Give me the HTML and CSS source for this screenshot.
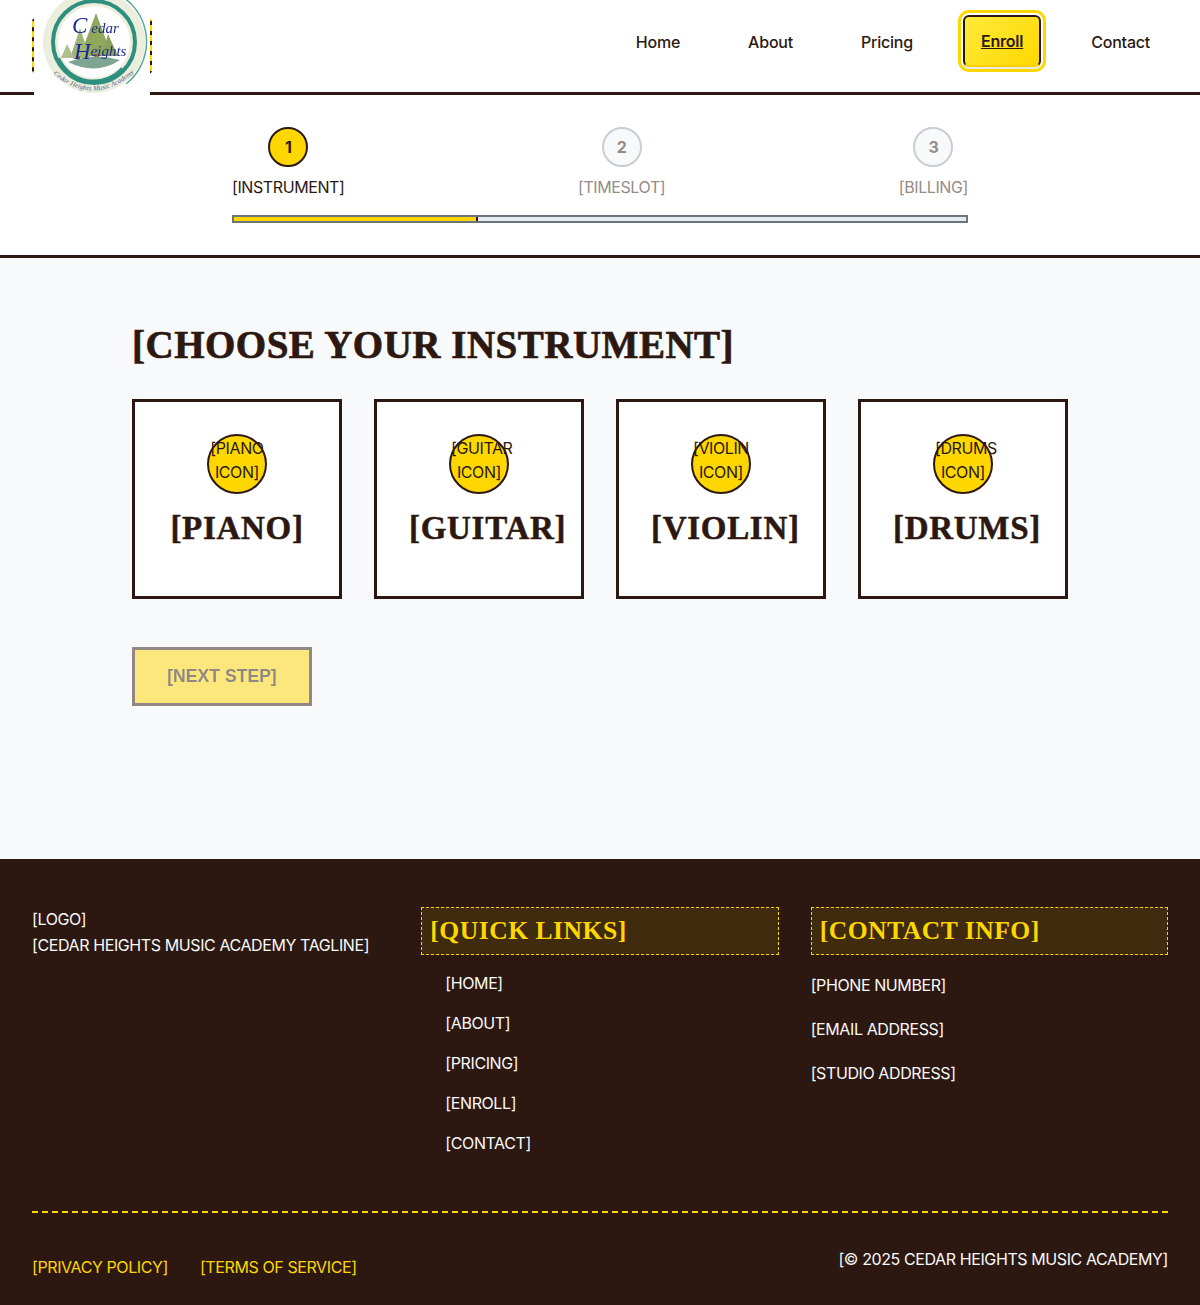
FILE: index.html
```html
<!DOCTYPE html>
<html lang="en">
<head>
    <meta charset="UTF-8">
    <meta name="viewport" content="width=device-width, initial-scale=1.0">
    <title>Cedar Heights Music Academy - Enroll</title>
    <link rel="stylesheet" href="styles.css">
</head>
<body>
    <header class="site-header">
        <a class="logo" href="#">
            <svg class="logo-mark" viewBox="0 0 116 95" width="116" height="95" role="img" aria-label="Cedar Heights Music Academy">
                <g class="logo-art">
                    <circle cx="60" cy="42" r="51" fill="#eceedd"/>
                    <path d="M84 -6 A54 54 0 0 1 92 84" fill="none" stroke="#5aa898" stroke-width="1.5"/>
                    <circle cx="60" cy="42" r="41" fill="none" stroke="#2f8f7f" stroke-width="4"/>
                    <path d="M25 58 A38 38 0 0 0 88 68" fill="none" stroke="#2f8f7f" stroke-width="2"/>
                    <circle cx="60" cy="42" r="36" fill="#fff"/>
                    <polygon points="62,13 46,56 78,56" fill="#8fa85c"/>
                    <polygon points="46,28 36,58 56,58" fill="#9fb578"/>
                    <polygon points="33,44 27,58 40,58" fill="#afc090"/>
                    <polygon points="74,34 68,56 84,56" fill="#8aa35c"/>
                    <rect x="60" y="54" width="5" height="10" fill="#a0603f"/>
                    <rect x="43" y="56" width="3" height="7" fill="#a0603f"/>
                    <path d="M34 62 Q60 52 86 60 Q62 76 34 62" fill="#7fa592"/>
                    <text class="logo-script" x="38" y="33"><tspan class="logo-cap">C</tspan><tspan dx="4">edar</tspan></text>
                    <text class="logo-script" x="40" y="59"><tspan class="logo-cap">H</tspan><tspan dy="-3">eights</tspan></text>
                </g>
                <path id="logoArc" d="M19 74 Q60 108 101 72" fill="none"/>
                <text class="logo-tag"><textPath href="#logoArc" textLength="90">Cedar Heights Music Academy</textPath></text>
            </svg>
        </a>
        <nav class="main-nav">
            <a href="#">Home</a>
            <a href="#">About</a>
            <a href="#">Pricing</a>
            <a class="nav-enroll" href="#">Enroll</a>
            <a href="#">Contact</a>
        </nav>
    </header>

    <section class="progress-section">
        <div class="progress-inner">
            <div class="steps">
                <div class="step active"><span class="step-num">1</span><span class="step-label">[INSTRUMENT]</span></div>
                <div class="step"><span class="step-num">2</span><span class="step-label">[TIMESLOT]</span></div>
                <div class="step"><span class="step-num">3</span><span class="step-label">[BILLING]</span></div>
            </div>
            <div class="progress-bar"><div class="progress-fill" style="width: 33.33%"></div></div>
        </div>
    </section>

    <main class="content">
        <h1>[CHOOSE YOUR INSTRUMENT]</h1>
        <div class="instruments">
            <div class="card">
                <div class="card-icon">[PIANO ICON]</div>
                <h3>[PIANO]</h3>
            </div>
            <div class="card">
                <div class="card-icon">[GUITAR ICON]</div>
                <h3>[GUITAR]</h3>
            </div>
            <div class="card">
                <div class="card-icon">[VIOLIN ICON]</div>
                <h3>[VIOLIN]</h3>
            </div>
            <div class="card">
                <div class="card-icon">[DRUMS ICON]</div>
                <h3>[DRUMS]</h3>
            </div>
        </div>
        <button class="next-btn" disabled>[NEXT STEP]</button>
    </main>

    <footer class="site-footer">
        <div class="footer-columns">
            <div class="footer-brand">
                <p>[LOGO]</p>
                <p>[CEDAR HEIGHTS MUSIC ACADEMY TAGLINE]</p>
            </div>
            <div>
                <h4>[QUICK LINKS]</h4>
                <ul class="footer-links">
                    <li><a href="#">[HOME]</a></li>
                    <li><a href="#">[ABOUT]</a></li>
                    <li><a href="#">[PRICING]</a></li>
                    <li><a href="#">[ENROLL]</a></li>
                    <li><a href="#">[CONTACT]</a></li>
                </ul>
            </div>
            <div>
                <h4>[CONTACT INFO]</h4>
                <div class="footer-contact">
                    <p>[PHONE NUMBER]</p>
                    <p>[EMAIL ADDRESS]</p>
                    <p>[STUDIO ADDRESS]</p>
                </div>
            </div>
        </div>
        <div class="footer-bottom">
            <div class="legal">
                <a href="#">[PRIVACY POLICY]</a>
                <a href="#">[TERMS OF SERVICE]</a>
            </div>
            <p class="copyright">[© 2025 CEDAR HEIGHTS MUSIC ACADEMY]</p>
        </div>
    </footer>
</body>
</html>
```

FILE: styles.css
```css
* {
    box-sizing: border-box;
}
body {
    margin: 0;
    font-family: Inter, 'Noto Sans', sans-serif;
    font-size: 16px;
    line-height: 1.6;
    letter-spacing: -0.4px;
    color: #2c1810;
    background-color: #ffffff;
}
a {
    color: inherit;
    text-decoration: none;
}

/* header */
.site-header {
    height: 95px;
    padding: 0 32px;
    display: flex;
    align-items: center;
    justify-content: space-between;
    background-color: #ffffff;
    border-bottom: 3px solid #2c1810;
}
.logo {
    position: relative;
    width: 120px;
    height: 56px;
    border-left: 2px dashed #ffd700;
    border-right: 2px dashed #ffd700;
    border-radius: 4px;
    background-color: #2c1810;
}
.logo-mark {
    position: absolute;
    left: 0;
    top: -18px;
    background-color: #ffffff;
}
.logo-art {
    filter: blur(0.4px);
}
.logo-script {
    font-family: 'Liberation Serif', serif;
    font-style: italic;
    font-size: 15px;
    letter-spacing: 0;
    fill: #1d2a8f;
}
.logo-cap {
    font-size: 23px;
}
.logo-tag {
    font-family: 'Liberation Serif', serif;
    font-style: italic;
    font-size: 7px;
    letter-spacing: 0;
    fill: #5d5f88;
}
.main-nav {
    display: flex;
    align-items: center;
    gap: 32px;
    margin-bottom: 7px;
    font-weight: 500;
    letter-spacing: -0.22px;
}
.main-nav a {
    padding: 8px 16px;
    border: 2px solid transparent;
    border-radius: 6px;
}
.main-nav .nav-enroll {
    padding: 12px 16px;
    line-height: 24px;
    font-weight: 600;
    text-decoration: underline;
    border-color: #2c1810 #2c1810 #ffcf00;
    background: linear-gradient(135deg, #ffeb3b, #ffd700);
    outline: 3px solid #ffd700;
    outline-offset: 2px;
    box-shadow: 0 2px 0 #e8e8e8;
    transform: translateY(-2px);
}

/* progress */
.progress-section {
    padding: 32px 0;
    background-color: #ffffff;
    border-bottom: 3px solid #2c1810;
}
.progress-inner {
    width: 736px;
    margin: 0 auto;
}
.steps {
    display: flex;
    justify-content: space-between;
    margin-bottom: 16px;
}
.step {
    display: flex;
    flex-direction: column;
    align-items: center;
    gap: 8px;
    color: #958b87;
}
.step.active {
    color: #2c1810;
}
.step-label {
    line-height: 24px;
}
.step-num {
    width: 40px;
    height: 40px;
    display: flex;
    align-items: center;
    justify-content: center;
    padding-top: 1px;
    border: 2px solid #c9ced4;
    border-radius: 50%;
    background-color: #f8f9fa;
    font-weight: 700;
}
.step.active .step-num {
    border-color: #2c1810;
    background-color: #ffd700;
}
.progress-bar {
    height: 8px;
    border: 2px solid #6c757d;
    background-color: #e9ecef;
}
.progress-fill {
    height: 100%;
    background-color: #ffd700;
    border-right: 2px solid #2c1810;
}

/* instruments */
.content {
    height: 601px;
    padding: 64px 132px 0;
    background-color: #f8f9fa;
}
h1 {
    margin: 0 0 32px;
    font-family: 'Liberation Serif', serif;
    font-size: 39px;
    line-height: 45px;
    letter-spacing: 0.5px;
    font-weight: 700;
    -webkit-text-stroke: 0.7px #2c1810;
}
.instruments {
    display: flex;
    gap: 32px;
    margin-bottom: 48px;
}
.card {
    width: 210px;
    height: 200px;
    padding: 32px;
    background-color: #ffffff;
    border: 3px solid #2c1810;
    text-align: center;
}
.card-icon {
    width: 60px;
    height: 60px;
    margin: 0 auto 16px;
    border: 2px solid #2c1810;
    border-radius: 50%;
    background-color: #ffd700;
    line-height: 24px;
}
.card h3 {
    margin: 0;
    font-family: 'Liberation Serif', serif;
    font-size: 33px;
    line-height: 37px;
    letter-spacing: 0.7px;
    font-weight: 700;
    -webkit-text-stroke: 0.5px #2c1810;
}
.next-btn {
    display: block;
    width: 180px;
    height: 59px;
    font-family: 'Liberation Sans', Arial, sans-serif;
    font-size: 17.6px;
    font-weight: 700;
    color: #2c1810;
    background-color: #ffd700;
    border: 3px solid #2c1810;
    opacity: 0.5;
}

/* footer */
.site-footer {
    height: 446px;
    padding: 48px 32px 0;
    background-color: #2c1810;
    color: #f8f9fa;
}
.footer-columns {
    display: grid;
    grid-template-columns: repeat(3, 1fr);
    gap: 32px;
    height: 306px;
    border-bottom: 2px dashed #ffd700;
}
.footer-brand p {
    margin: 0;
}
h4 {
    margin: 0 0 16px;
    padding: 8px;
    height: 48px;
    font-family: 'Liberation Serif', serif;
    font-size: 25.6px;
    line-height: 30px;
    letter-spacing: 0.5px;
    font-weight: 700;
    color: #ffd700;
    background-color: rgba(255, 215, 0, 0.1);
    border: 1px dashed #ffd700;
}
.footer-links {
    margin: 0;
    padding: 0 0 0 24px;
    list-style: none;
}
.footer-links li {
    margin-bottom: 14.4px;
}
.footer-contact {
    padding-top: 2px;
}
.footer-contact p {
    margin: 0 0 18.4px;
}
.footer-bottom {
    display: flex;
    justify-content: space-between;
    padding-top: 34px;
}
.legal {
    display: flex;
    gap: 32px;
    padding-top: 8px;
    color: #ffd700;
}
.copyright {
    margin: 0;
}
```
